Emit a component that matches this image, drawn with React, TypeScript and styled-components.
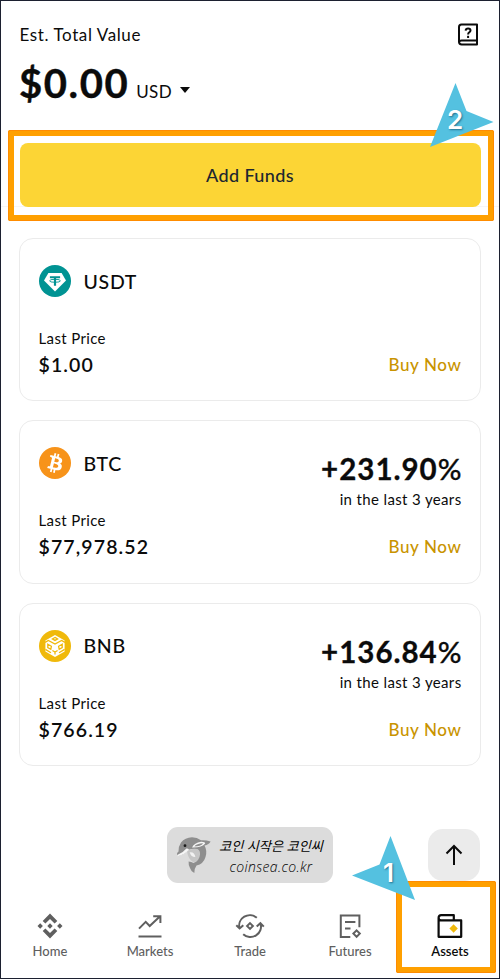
import styled, { createGlobalStyle } from "styled-components";

const GlobalStyle = createGlobalStyle`
  * {
    box-sizing: border-box;
  }
  body {
    margin: 0;
    background-color: #fff;
    font-family: Lato, "Noto Sans CJK KR", sans-serif;
    color: #0b0b0b;
  }
`;

const Screen = styled.div`
  display: flex;
  flex-direction: column;
  width: 500px;
  height: 979px;
  border: 1px solid #1c2030;
  overflow: hidden;
`;

const Header = styled.header`
  display: flex;
  justify-content: space-between;
  align-items: flex-start;
  height: 57px;
  padding: 21px 20px 0 18.5px;
`;

const Caption = styled.span`
  font-size: 17px;
  line-height: 26px;
  letter-spacing: 0.6px;
`;

const Balance = styled.div`
  display: flex;
  align-items: baseline;
  height: 85px;
  padding-left: 18px;
`;

const Amount = styled.span`
  font-size: 40px;
  font-weight: 700;
  line-height: 50px;
  letter-spacing: 1.6px;
  -webkit-text-stroke: 0.4px #0b0b0b;
`;

const Currency = styled.span`
  margin-left: 7px;
  font-size: 17px;
  letter-spacing: 0.3px;
`;

const Caret = styled.span`
  margin-left: 8px;
  align-self: flex-start;
  margin-top: 29px;
  border: 5px solid transparent;
  border-top: 6px solid #0b0b0b;
  border-bottom: 0;
`;

const FundsArea = styled.section`
  position: relative;
  height: 64px;
  padding: 0 18.5px;
  border-bottom: 1px solid #f6f6f6;
`;

const AddFunds = styled.button`
  display: block;
  width: 100%;
  height: 64px;
  border: 0;
  border-radius: 8px;
  background-color: #fcd535;
  color: #202630;
  font-family: inherit;
  font-size: 18px;
  font-weight: 500;
  letter-spacing: 0.4px;
`;

const Highlight = styled.div<{ $inset: string }>`
  position: absolute;
  inset: ${(props) => props.$inset};
  border: 6px solid #ffa000;
  border-radius: 2px;
  outline: 1px solid #ff8c00;
  outline-offset: -1px;
`;

const Pointer = styled.div<{ $left: number; $top: number }>`
  position: absolute;
  left: ${(props) => props.$left}px;
  top: ${(props) => props.$top}px;
  width: 64px;
  height: 66px;
  z-index: 2;
  svg {
    display: block;
  }
`;

const PointerNumber = styled.span<{ $left: number; $top: number }>`
  position: absolute;
  left: ${(props) => props.$left}px;
  top: ${(props) => props.$top}px;
  color: #fff;
  font-family: Inter, sans-serif;
  font-size: 26px;
  font-weight: 600;
  line-height: 30px;
  text-shadow: 1px 1px 2px rgba(0, 60, 90, 0.6);
`;

const CardList = styled.ul`
  display: flex;
  flex-direction: column;
  gap: 19px;
  margin: 31px 0 0;
  padding: 0 18px 0 18px;
  list-style: none;
`;

const Card = styled.li`
  display: grid;
  grid-template-columns: 1fr auto;
  grid-template-rows: 70px 1fr;
  height: 163.3px;
  padding: 17px 18.5px 0 18.5px;
  border: 1.5px solid #ebebeb;
  border-radius: 14px;
`;

const Coin = styled.div`
  display: flex;
  align-items: center;
  gap: 13px;
  height: 50px;
`;

const CoinName = styled.span`
  font-size: 19.5px;
  font-weight: 500;
  letter-spacing: 0.7px;
`;

const Growth = styled.div`
  display: flex;
  flex-direction: column;
  align-items: flex-end;
  padding-top: 12px;
`;

const Percent = styled.span`
  margin-right: -1px;
  font-size: 29.5px;
  font-weight: 700;
  letter-spacing: 1px;
  line-height: 37px;
  -webkit-text-stroke: 0.3px #0b0b0b;
  i {
    font-style: normal;
    font-weight: 500;
  }
`;

const Small = styled.span`
  font-size: 15px;
  line-height: 24px;
  letter-spacing: 0.36px;
`;

const Price = styled.div`
  display: flex;
  flex-direction: column;
`;

const PriceValue = styled.span`
  font-size: 19.5px;
  font-weight: 600;
  line-height: 29px;
  letter-spacing: 1.1px;
`;

const BuyNow = styled.a`
  padding-top: 24px;
  color: #c99400;
  font-size: 17px;
  font-weight: 500;
  line-height: 29px;
  letter-spacing: 0.6px;
  text-align: right;
`;

const Floating = styled.div`
  display: flex;
  align-items: center;
  justify-content: space-between;
  margin-top: auto;
  height: 58px;
  padding: 0 19px 0 166px;
`;

const Watermark = styled.div`
  display: flex;
  gap: 5px;
  width: 166px;
  height: 56px;
  padding: 9px 9px;
  border-radius: 11px;
  background-color: #dcdcdc;
`;

const WatermarkText = styled.div`
  display: flex;
  flex: 1;
  flex-direction: column;
  align-items: center;
  padding-left: 1px;
  color: #000;
  font-family: "Open Sans", "Noto Sans CJK KR", sans-serif;
  font-size: 13.2px;
  font-style: italic;
  font-weight: 400;
  line-height: 20px;
  white-space: nowrap;
`;

const SiteName = styled.span`
  font-size: 14px;
  font-weight: 300;
  letter-spacing: 0.35px;
  line-height: 21px;
`;

const TopButton = styled.button`
  display: grid;
  place-items: center;
  width: 52px;
  height: 52px;
  border: 0;
  border-radius: 15px;
  background-color: #ebebeb;
`;

const NavBar = styled.nav`
  display: grid;
  grid-template-columns: repeat(5, 1fr);
  height: 94px;
  margin: 0 -1px;
`;

const NavItem = styled.a<{ $active?: boolean }>`
  position: relative;
  display: flex;
  flex-direction: column;
  align-items: center;
  gap: 2px;
  padding-top: 29px;
  color: ${(props) => (props.$active ? "#0b0b0b" : "#5f5f5f")};
  font-size: 13px;
  font-weight: ${(props) => (props.$active ? 600 : 500)};
  line-height: 20px;
`;

function GuideIcon() {
  return (
    <svg width="22" height="24" viewBox="0 0 22 24" fill="none" stroke="#0b0b0b" strokeWidth="2">
      <path d="M20 18.5V2.5H4.5Q2 2.5 2 5V19.8Q2 22.4 4.7 22.4H20V18.5H4.7Q2 18.5 2 20.5" strokeLinejoin="round" />
      <path d="M8.6 8.6Q8.8 6.5 11.1 6.5Q13.5 6.5 13.5 8.6Q13.5 9.8 12.2 10.4Q11.1 11 11.1 12.6" />
      <path d="M11.1 13.8V16" />
    </svg>
  );
}

function UsdtIcon() {
  return (
    <svg width="32" height="32" viewBox="0 0 32 32">
      <circle cx="16" cy="16" r="16" fill="#009393" />
      <path d="M9.4 8H22.6L27 15.6L16 26.5L5 15.6Z" fill="#fff" />
      <path d="M10.9 11.2H21.1V13.2H17.1V20.8H14.9V13.2H10.9Z" fill="#009393" />
      <ellipse cx="16" cy="15.8" rx="5.4" ry="1.5" fill="none" stroke="#009393" strokeWidth="0.9" />
    </svg>
  );
}

function BtcIcon() {
  return (
    <svg width="32" height="32" viewBox="0 0 32 32">
      <circle cx="16" cy="16" r="16" fill="#f7931a" />
      <path
        fill="#fff"
        d="M23.189 14.02c.314-2.096-1.283-3.223-3.465-3.975l.708-2.84-1.728-.43-.69 2.765c-.454-.114-.92-.22-1.385-.326l.695-2.783L15.596 6l-.708 2.839c-.376-.086-.746-.17-1.104-.26l.002-.009-2.384-.595-.46 1.846s1.283.294 1.256.312c.7.175.826.638.805 1.006l-.806 3.235c.048.012.11.03.18.057l-.183-.045-1.13 4.532c-.086.212-.303.531-.793.41.018.025-1.256-.313-1.256-.313l-.858 1.978 2.25.561c.418.105.828.215 1.231.318l-.715 2.872 1.727.43.708-2.84c.472.127.93.245 1.378.357l-.706 2.828 1.728.43.715-2.866c2.948.558 5.164.333 6.097-2.333.752-2.146-.037-3.385-1.588-4.192 1.13-.26 1.98-1.003 2.207-2.538zm-3.95 5.538c-.533 2.147-4.148.986-5.32.695l.95-3.805c1.172.293 4.929.872 4.37 3.11zm.535-5.569c-.487 1.953-3.495.96-4.47.717l.86-3.45c.975.243 4.118.696 3.61 2.733z"
      />
    </svg>
  );
}

function BnbIcon() {
  return (
    <svg width="32" height="32" viewBox="0 0 32 32">
      <circle cx="16" cy="16" r="16" fill="#f0b90b" />
      <path d="M16 5L25.6 10.4V21.4L16 27L6.4 21.4V10.4Z" fill="#fff" />
      <g fill="none" stroke="#f0b90b" strokeWidth="1.3">
        <path d="M6 12.4L9.4 10.4L16 14L22.6 10.4L26 12.4" />
        <path d="M16 7.4L18.6 8.9L16 10.4L13.4 8.9Z" />
        <path d="M8.8 14.2L12.4 16.3L11.8 19.3L8.8 17.6ZM23.2 14.2L19.6 16.3L20.2 19.3L23.2 17.6Z" />
        <path d="M6.4 19.4L12 22.8M25.6 19.4L20 22.8M13.4 20.5L16 22L18.6 20.5M16 22V24.6" />
      </g>
    </svg>
  );
}

function DolphinIcon() {
  return (
    <svg width="36" height="38" viewBox="0 0 36 38">
      <path
        fill="#c6c6c6"
        d="M11 15Q17 12 24 13L26 20Q23 26 17 26Q12 23 11 15Z"
      />
      <path
        fill="#8e8e8e"
        d="M1 18.5Q.5 17 2.5 15.5Q2.5 10 5 6.5Q9 1.5 16 1.2Q21 1.2 25 4.2Q30 3.8 34.6 5.6Q33 8.6 28.5 9.6Q31.5 15 29.5 21Q27.5 28 20.5 29.5Q18.5 32 18.3 37Q15 35.5 14 32Q12.3 29 12.6 25.4Q15.4 25.4 17.4 27Q23.6 24.6 24 18.4Q24.4 14.8 21.6 13Q16 12.4 12.4 13.8Q8.4 18.6 2 20Z"
      />
      <path fill="#f6f6f6" d="M1.2 19Q7 17 10.4 12.6Q12 12.4 13 13.4Q9 18.6 1.6 20.2Z" />
      <path fill="#f6f6f6" d="M16 11.4Q18.4 6.8 25 5.8Q29 5.6 29.2 7.4Q26 11.6 16 11.4Z" />
      <path fill="#8e8e8e" d="M18.4 10.4Q20.6 7.4 27.2 7.2Q24.6 10.4 18.4 10.4Z" />
      <path fill="#f2f2f2" d="M13.6 16.4Q18.4 15.6 19.4 21Q15.6 21.4 13.6 16.4Z" />
      <circle cx="9" cy="9.7" r="1.4" fill="#1a1a1a" />
    </svg>
  );
}

function HomeIcon() {
  return (
    <svg width="26" height="26" viewBox="0 0 26 26" fill="currentColor">
      <path d="M13 .6L20.3 7.9L17.6 10.6L13 6L8.4 10.6L5.7 7.9Z" />
      <path d="M13 25.4L20.3 18.1L17.6 15.4L13 20L8.4 15.4L5.7 18.1Z" />
      <path d="M13 10.3L15.7 13L13 15.7L10.3 13ZM3.2 10.3L5.9 13L3.2 15.7L.5 13ZM22.8 10.3L25.5 13L22.8 15.7L20.1 13Z" />
    </svg>
  );
}

function MarketsIcon() {
  return (
    <svg width="26" height="26" viewBox="0 0 26 26" fill="none" stroke="currentColor" strokeWidth="2">
      <path d="M2 15.6L8.7 8.9L12.7 13L22.8 3.6M16.2 3.2H23.4V10" />
      <path d="M1.5 23.5H24.5" />
    </svg>
  );
}

function TradeIcon() {
  return (
    <svg width="30" height="26" viewBox="0 0 30 26" fill="none" stroke="currentColor" strokeWidth="2">
      <path d="M21.8 4.8A10.6 10.6 0 0 0 4.5 15.3M1.3 12.2L4.6 15.5L8.3 12.2" />
      <path d="M8.2 21.2A10.6 10.6 0 0 0 25.5 10.2M21.7 13.6L25.4 10.2L28.8 13.6" />
      <path d="M15 10.1L17.9 13L15 15.9L12.1 13Z" />
    </svg>
  );
}

function FuturesIcon() {
  return (
    <svg width="26" height="26" viewBox="0 0 26 26" fill="none" stroke="currentColor" strokeWidth="2">
      <path d="M13.3 24H3.8V2.4H22.4V14.2" />
      <path d="M8 9H18.4M8 15.4H13.5" />
      <path d="M19.6 17.4L22.8 20.6L19.6 23.8L16.4 20.6Z" />
    </svg>
  );
}

function AssetsIcon() {
  return (
    <svg width="26" height="26" viewBox="0 0 26 26" fill="none" stroke="currentColor" strokeWidth="2.2">
      <path d="M1.6 5V23.8H24.2V7.4H4.2Q1.6 7.4 1.6 4.8Q1.6 2.2 4.2 2.2H16.8V7.4" strokeLinejoin="round" />
      <path d="M16.6 11.3L20.8 15.5L16.6 19.7L12.4 15.5Z" fill="#f0b90b" stroke="none" />
    </svg>
  );
}

const coins = [
  { name: "USDT", price: "$1.00", icon: <UsdtIcon /> },
  { name: "BTC", price: "$77,978.52", growth: "+231.90", icon: <BtcIcon /> },
  { name: "BNB", price: "$766.19", growth: "+136.84", icon: <BnbIcon /> },
];

const tabs = [
  { label: "Home", icon: <HomeIcon /> },
  { label: "Markets", icon: <MarketsIcon /> },
  { label: "Trade", icon: <TradeIcon /> },
  { label: "Futures", icon: <FuturesIcon /> },
];

function App() {
  return (
    <>
      <GlobalStyle />
      <Screen>
        <Header>
          <Caption>Est. Total Value</Caption>
          <GuideIcon />
        </Header>
        <Balance>
          <Amount>$0.00</Amount>
          <Currency>USD</Currency>
          <Caret />
        </Balance>
        <FundsArea>
          <AddFunds>Add Funds</AddFunds>
          <Highlight $inset="-13px 5px -15px 7px" />
          <Pointer $left={429} $top={-61}>
            <svg width="64" height="66" viewBox="0 0 64 66">
              <path d="M25.5 1L36.5 29L63.5 40L0 65Z" fill="#54c1e0" />
            </svg>
            <PointerNumber $left={17} $top={23}>2</PointerNumber>
          </Pointer>
        </FundsArea>
        <CardList>
          {coins.map((coin) => (
            <Card key={coin.name}>
              <Coin>
                {coin.icon}
                <CoinName>{coin.name}</CoinName>
              </Coin>
              <Growth>
                {coin.growth && (
                  <>
                    <Percent>
                      {coin.growth}
                      <i>%</i>
                    </Percent>
                    <Small>in the last 3 years</Small>
                  </>
                )}
              </Growth>
              <Price>
                <Small>Last Price</Small>
                <PriceValue>{coin.price}</PriceValue>
              </Price>
              <BuyNow>Buy Now</BuyNow>
            </Card>
          ))}
        </CardList>
        <Floating>
          <Watermark>
            <DolphinIcon />
            <WatermarkText>
              <span>코인 시작은 코인씨</span>
              <SiteName>coinsea.co.kr</SiteName>
            </WatermarkText>
          </Watermark>
          <TopButton>
            <svg width="20" height="22" viewBox="0 0 20 22" fill="none" stroke="#0b0b0b" strokeWidth="2">
              <path d="M10 21V2M2.5 9.5L10 2L17.5 9.5" />
            </svg>
          </TopButton>
        </Floating>
        <NavBar>
          {tabs.map((tab) => (
            <NavItem key={tab.label}>
              {tab.icon}
              {tab.label}
            </NavItem>
          ))}
          <NavItem $active>
            <AssetsIcon />
            Assets
            <Highlight $inset="-3px 4px 5px -4px" />
            <Pointer $left={-48} $top={-49}>
              <svg width="64" height="66" viewBox="0 0 64 66">
                <path d="M38.5 1L27.5 29.5L0 40.5L63 65Z" fill="#54c1e0" />
              </svg>
              <PointerNumber $left={31} $top={23}>1</PointerNumber>
            </Pointer>
          </NavItem>
        </NavBar>
      </Screen>
    </>
  );
}

export default App;
